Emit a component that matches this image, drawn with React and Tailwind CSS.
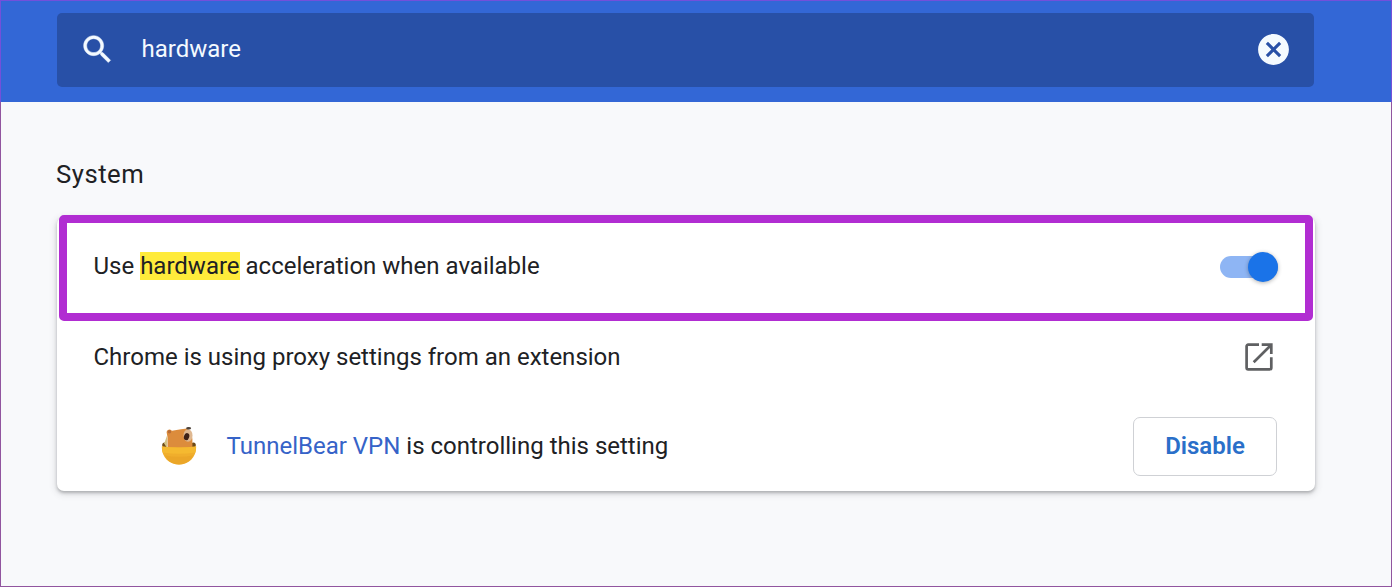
import { useState } from 'react';

function SearchIcon() {
  return (
    <svg
      viewBox="0 0 24 24"
      className="h-[37px] w-[37px] shrink-0"
      fill="currentColor"
      stroke="currentColor"
      strokeWidth="0.3"
    >
      <path d="M15.5 14h-.79l-.28-.27C15.41 12.59 16 11.11 16 9.5 16 5.91 13.09 3 9.5 3S3 5.91 3 9.5 5.91 16 9.5 16c1.61 0 3.09-.59 4.23-1.57l.27.28v.79l5 4.99L20.49 19l-4.99-5zm-6 0C7.01 14 5 11.99 5 9.5S7.01 5 9.5 5 14 7.01 14 9.5 11.99 14 9.5 14z" />
    </svg>
  );
}

function ClearIcon() {
  return (
    <svg viewBox="0 0 24 24" className="h-[37px] w-[37px]" fill="currentColor">
      <path d="M12 2C6.47 2 2 6.47 2 12s4.47 10 10 10 10-4.47 10-10S17.53 2 12 2zm5 13.59L15.59 17 12 13.41 8.41 17 7 15.59 10.59 12 7 8.41 8.41 7 12 10.59 15.59 7 17 8.41 13.41 12 17 15.59z" />
    </svg>
  );
}

function ExternalIcon() {
  return (
    <svg viewBox="0 0 28 28" className="h-7 w-7" fill="none" stroke="currentColor" strokeWidth="2.7">
      <path d="M14 1.7H3.2a1.6 1.6 0 0 0-1.6 1.6v21.4a1.6 1.6 0 0 0 1.6 1.6h21.5a1.6 1.6 0 0 0 1.6-1.6V14.3" />
      <path d="M16.7 1.7h9.6v9.2M26.3 1.7L8.7 19.2" />
    </svg>
  );
}

function BearIcon() {
  return (
    <svg viewBox="0 0 36 40" className="h-10 w-9 shrink-0">
      <ellipse cx="3.6" cy="19" rx="2.4" ry="2.6" fill="#6d4a17" />
      <ellipse cx="32.4" cy="19" rx="2.4" ry="2.6" fill="#6d4a17" />
      <path d="M6 22l.2-13-3 8.500z" fill="#d3c384" />
      <path d="M6.5 22V11L5.6 6.2Q6 3.5 9 3.6l2 1.1 9-1.5 6-.7 4 3.5 1.4 7V22z" fill="#dc8c3c" />
      <circle cx="8.4" cy="5.8" r="1.8" fill="#b86d38" />
      <ellipse cx="27" cy="9.5" rx="4.5" ry="6.2" fill="#dfb891" />
      <ellipse cx="25.6" cy="10.6" rx="2.6" ry="3.6" fill="#3d2117" transform="rotate(18 25.6 10.6)" />
      <ellipse cx="27.6" cy="2.3" rx="2.5" ry="1.3" fill="#4b4037" />
      <path d="M.8 20.5Q18 22.5 35.2 20.5C35.4 31.5 27.5 38.5 18 38.5S.6 31.5.8 20.5z" fill="#f0ae2c" />
      <path d="M1 20.5Q18 22.5 35 20.5l-.5 6q-16.500 2.500-33 0z" fill="#f5b930" />
      <path d="M4 29.500q14 2.500 28 0C29.500 35 24.500 38.500 18 38.500S6.500 35 4 29.500z" fill="#eba628" />
    </svg>
  );
}

function Toggle({ checked, onChange }) {
  return (
    <button
      type="button"
      role="switch"
      aria-checked={checked}
      aria-label="Use hardware acceleration when available"
      onClick={() => onChange(!checked)}
      className={`-mt-[2px] flex h-[22px] w-[58px] items-center rounded-full ${checked ? 'justify-end bg-[#8eb5f4]' : 'justify-start bg-[#bdc1c6]'}`}
    >
      <span
        className={`h-[30px] w-[30px] rounded-full shadow-[0_1px_4px_rgba(0,0,0,0.3)] ${checked ? 'bg-[#1a73e8]' : 'bg-white'}`}
      />
    </button>
  );
}

export default function App() {
  const [query, setQuery] = useState('hardware');
  const [accelerated, setAccelerated] = useState(true);

  return (
    <div className="flex h-[587px] w-full flex-col overflow-hidden bg-[#f8f9fb] font-['Roboto',sans-serif] text-[24px] leading-[28px] text-[#202124]">
      <header className="h-[102px] shrink-0 border-x border-t border-[#7350da] bg-[#3367d6] px-14 pt-3">
        <div className="flex h-[74px] w-[1257px] items-center rounded-[5px] bg-[#2850a7] pr-[22px] pb-[2px] pl-[22px] text-[#f4faff]">
          <SearchIcon />
          <input
            value={query}
            onChange={(e) => setQuery(e.target.value)}
            aria-label="Search settings"
            className="ml-[25.500px] h-[30px] min-w-0 flex-1 bg-transparent text-[24px] outline-none"
          />
          <button type="button" aria-label="Clear search" onClick={() => setQuery('')}>
            <ClearIcon />
          </button>
        </div>
      </header>

      <main className="flex-1 border-x border-b border-[#91559f] px-[55px] pt-[56px]">
        <h2 className="text-[25.700px] leading-[32px] tracking-[0.5px]">System</h2>

        <section className="mt-[27px] ml-px flow-root h-[274px] w-[1258px] rounded-[7px] bg-white px-[2px] shadow-[0_2px_3px_rgba(60,64,67,0.3),0_2px_6px_2px_rgba(60,64,67,0.13)]">
          <div className="-mt-[2px] flex h-[106px] w-[1254px] items-center justify-between rounded-[5px] border-8 border-[#b12dd2] bg-white pr-[27px] pl-[26.500px]">
            <p className="-mt-1">
              Use <mark className="bg-[#ffeb3b] text-inherit">hardware</mark> acceleration when available
            </p>
            <Toggle checked={accelerated} onChange={setAccelerated} />
          </div>

          <div className="flex h-[72px] items-center justify-between pr-[40px] pl-[34.500px]">
            <p>Chrome is using proxy settings from an extension</p>
            <button type="button" aria-label="Open proxy settings" className="text-[#5f6062]">
              <ExternalIcon />
            </button>
          </div>

          <div className="mt-[23px] flex h-[60px] items-center pr-[36px] pl-[102px]">
            <BearIcon />
            <p className="ml-[29.500px] flex-1">
              <span className="text-[#3663c8]">TunnelBear VPN</span> is controlling this setting
            </p>
            <button
              type="button"
              className="h-[59px] w-[144px] rounded-[7px] border border-[#cfd1d5] font-semibold text-[#2a6fc9]"
            >
              Disable
            </button>
          </div>
        </section>
      </main>
    </div>
  );
}
